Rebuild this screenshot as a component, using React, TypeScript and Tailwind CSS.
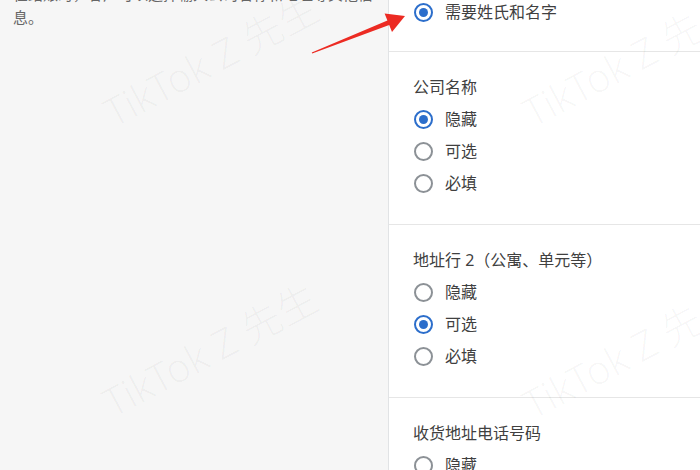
import React from 'react'

type Option = { label: string; checked?: boolean }

const sections: { title: string; options: Option[] }[] = [
  {
    title: '公司名称',
    options: [{ label: '隐藏', checked: true }, { label: '可选' }, { label: '必填' }],
  },
  {
    title: '地址行 2（公寓、单元等）',
    options: [{ label: '隐藏' }, { label: '可选', checked: true }, { label: '必填' }],
  },
  {
    title: '收货地址电话号码',
    options: [{ label: '隐藏' }, { label: '可选' }, { label: '必填' }],
  },
]

function Radio({ label, checked }: Option) {
  return (
    <div className="flex items-center h-[32px] gap-[12px] pl-[1px]">
      {checked ? (
        <span className="w-[19px] h-[19px] rounded-full border-2 border-[#2c6ecb] flex items-center justify-center shrink-0">
          <span className="w-[9px] h-[9px] rounded-full bg-[#2c6ecb]" />
        </span>
      ) : (
        <span className="w-[19px] h-[19px] rounded-full border-2 border-[#8c9196] shrink-0" />
      )}
      <span className="text-[16px] text-[#404040]">{label}</span>
    </div>
  )
}

function Watermark({ className }: { className: string }) {
  return (
    <div
      className={`absolute -translate-x-1/2 -translate-y-1/2 -rotate-[28deg] whitespace-nowrap text-[40px] font-light text-black/[0.035] pointer-events-none ${className}`}
    >
      TikTok Z 先生
    </div>
  )
}

export default function App() {
  return (
    <div
      className="relative w-[700px] h-[470px] overflow-hidden flex"
      style={{ fontFamily: '"Noto Sans", "Noto Sans CJK SC", sans-serif' }}
    >
      {/* Left description */}
      <div className="w-[389px] shrink-0 bg-[#f6f6f6] border-r border-[#e1e3e5] px-[13px]">
        <p className="-mt-[17px] text-[15px] leading-[23px] text-[#666]">
          在结账时，客户可以选择输入公司名称和地址等其他信
          <br />
          息。
        </p>
      </div>

      {/* Right options */}
      <div className="flex-1 bg-white flex flex-col">
        <div className="h-[52px] border-b border-[#e6e6e6] pl-[24px] shrink-0">
          <div className="-mt-[4px]">
            <Radio label="需要姓氏和名字" checked />
          </div>
        </div>
        {sections.map((s) => (
          <div key={s.title} className="pl-[24px] pt-[23px] pb-[25px] border-b border-[#e6e6e6] shrink-0">
            <div className="h-[24px] leading-[24px] text-[16px] text-[#404040]">{s.title}</div>
            <div className="mt-[4px]">
              {s.options.map((o) => (
                <Radio key={o.label} {...o} />
              ))}
            </div>
          </div>
        ))}
      </div>

      {/* Watermarks */}
      <Watermark className="left-[211px] top-[60px]" />
      <Watermark className="left-[210px] top-[350px]" />
      <Watermark className="left-[630px] top-[60px]" />
      <Watermark className="left-[630px] top-[352px]" />

      {/* Red arrow */}
      <svg className="absolute left-0 top-0 pointer-events-none" width="700" height="470">
        <polygon
          points="311.8,52.4 387.4,20.4 384.6,13.4 405,16 392,32 389.2,25 312.2,53.6"
          fill="#ec2b23"
        />
      </svg>
    </div>
  )
}
